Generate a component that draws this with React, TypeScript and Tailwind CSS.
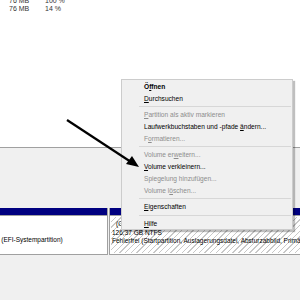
import React from "react"

type Item = { label: React.ReactNode; disabled?: boolean; bold?: boolean } | "sep"

const u = (s: string) => <span className="underline underline-offset-1">{s}</span>

const items: Item[] = [
  { label: <>Ö{u("f")}fnen</>, bold: true },
  { label: <>{u("D")}urchsuchen</> },
  "sep",
  { label: <>{u("P")}artition als aktiv markieren</>, disabled: true },
  { label: <>Laufwerkbuchstaben und -pfade {u("ä")}ndern...</> },
  { label: <>F{u("o")}rmatieren...</>, disabled: true },
  "sep",
  { label: <>Volume er{u("w")}eitern...</>, disabled: true },
  { label: <>{u("V")}olume verkleinern...</> },
  { label: <>Spiegelung hinzufügen...</>, disabled: true },
  { label: <>Volume l{u("ö")}schen...</>, disabled: true },
  "sep",
  { label: <>{u("E")}igenschaften</> },
  "sep",
  { label: <>{u("H")}ilfe</> },
]

export default function App() {
  return (
    <div
      className="relative w-[300px] h-[300px] overflow-hidden bg-[#f0f0f0] text-black"
      style={{ fontFamily: '"Liberation Sans", Arial, sans-serif' }}
    >
      {/* volume list */}
      <div className="h-[151px] bg-white border-b border-[#a0a0a0] text-[7px] text-[#333]">
        <div className="flex -mt-[3px] h-[8px] items-center">
          <span className="pl-[9px] w-[45px]">76 MB</span>
          <span>100 %</span>
        </div>
        <div className="flex h-[9px] items-center">
          <span className="pl-[9px] w-[45px]">76 MB</span>
          <span>14 %</span>
        </div>
      </div>

      {/* graphical view */}
      <div className="h-[60px]" />
      <div className="flex h-[47px] text-[6.5px] leading-[8.5px]">
        <div className="w-[108px] shrink-0 flex flex-col">
          <div className="h-[7px] bg-[#000080] border-r border-[#a0a0a0]" />
          <div className="flex-1 bg-white border border-l-0 border-[#a0a0a0] overflow-hidden whitespace-nowrap">
            <div className="pt-[20px] -ml-[28px]">Fehlerfrei (EFI-Systempartition)</div>
          </div>
        </div>
        <div className="w-[1px] shrink-0" />
        <div className="flex-1 min-w-0 flex flex-col">
          <div className="h-[7px] bg-[#000080] border-l border-[#a0a0a0]" />
          <div className="flex-1 bg-white border border-r-0 border-[#a0a0a0] p-[1px] pr-0 overflow-hidden">
            <div className="h-full bg-[repeating-linear-gradient(135deg,#ffffff_0px,#ffffff_3px,#c8c8c8_3px,#c8c8c8_4px)] whitespace-nowrap pl-[1px] pt-[3px]">
              <div className="pl-[4px]">(C</div>
              <div>126,37 GB NTFS</div>
              <div>Fehlerfrei (Startpartition, Auslagerungsdatei, Absturzabbild, Primäre Partition)</div>
            </div>
          </div>
        </div>
      </div>

      {/* context menu */}
      <div className="absolute left-[121px] top-[79px] w-[172px] h-[151px] bg-[#f0f0f0] border border-[#cccccc] shadow-[2px_2px_1px_rgba(0,0,0,0.25)] py-[1px] text-[6.6px]">
        {items.map((it, i) =>
          it === "sep" ? (
            <div key={i} className="ml-[17px] mr-[1px] my-[2px] h-px bg-[#d7d7d7]" />
          ) : (
            <div
              key={i}
              className={
                "h-[11.7px] leading-[11.7px] pl-[22px] whitespace-nowrap " +
                (it.disabled ? "text-[#8d8d8d]" : "text-black") +
                (it.bold ? " font-bold" : "")
              }
            >
              {it.label}
            </div>
          )
        )}
      </div>

      {/* arrow */}
      <svg className="absolute left-0 top-0" width="300" height="300">
        <line x1="67" y1="120" x2="131" y2="162" stroke="#000" strokeWidth="2.2" />
        <polygon points="139,167 126,164 132,156" fill="#000" />
      </svg>
    </div>
  )
}
